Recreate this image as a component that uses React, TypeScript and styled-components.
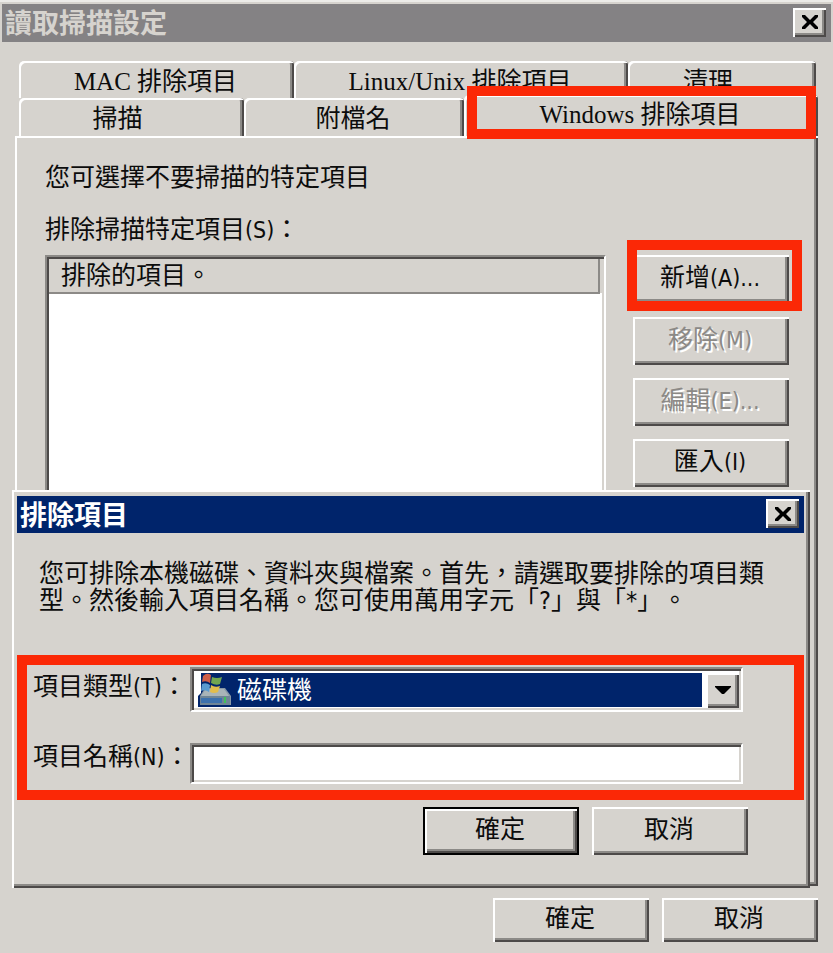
import React from "react";
import styled, { createGlobalStyle, css } from "styled-components";

const face = "#d6d3ce";
const light = "#ffffff";
const shade = "#8c8a87";
const dark = "#4d4a49";
const navy = "#00246b";
const ink = "#0c0c0c";
const red = "#fb2806";
const cjk = `"Noto Sans CJK TC"`;
const dialogLatin = `"DejaVu Sans Condensed", "DejaVu Sans"`;

const raised = css`
  box-shadow: inset 2px 2px ${light}, inset -2px -2px ${dark}, inset -4px -4px ${shade};
`;

const sunken = css`
  border: 2px solid;
  border-color: ${shade} ${light} ${light} ${shade};
  box-shadow: inset 2px 2px ${dark}, inset -2px -2px ${face};
`;

const GlobalStyle = createGlobalStyle`
  * { box-sizing: border-box; }
  body {
    margin: 0;
    background: ${face};
    color: ${ink};
    font: 25px/32px "Liberation Serif", ${cjk}, serif;
    text-spacing-trim: space-all;
  }
  button, input, select { font: inherit; color: inherit; }
`;

const PropertyWindow = styled.main`
  position: relative;
  background: ${face};
  border-top: 2px solid #ecebe8;
  padding: 2px 0 12px;
`;

const TitleBar = styled.header<{ $active?: boolean }>`
  display: flex;
  align-items: center;
  justify-content: space-between;
  height: ${(p) => (p.$active ? 37 : 38)}px;
  margin: ${(p) => (p.$active ? "0" : "0 2px")};
  padding: 0 5px 2px 3px;
  background: ${(p) => (p.$active ? navy : "#848284")};
  color: ${(p) => (p.$active ? "#ffffff" : face)};
`;

const Title = styled.h1`
  margin: 0;
  font: 700 27px/32px ${cjk}, sans-serif;
`;

const CloseButton = styled.button`
  display: grid;
  place-items: center;
  width: 33px;
  height: 29px;
  padding: 0;
  border: 0;
  background: ${face};
  color: #000;
  ${raised}
`;

const marked = css`
  position: relative;
  z-index: 1;
  &::after {
    content: "";
    position: absolute;
    border: 10px solid ${red};
    pointer-events: none;
  }
`;

const Tabs = styled.div`
  margin-top: 19px;
`;

const TabRow = styled.div<{ $back?: boolean; $columns: string }>`
  display: grid;
  grid-template-columns: ${(p) => p.$columns};
  height: ${(p) => (p.$back ? 37 : 38)}px;
  margin: 0 ${(p) => (p.$back ? 17 : 15)}px 0 19px;
`;

const Tab = styled.button<{ $short?: boolean }>`
  min-width: 0;
  padding: 4px ${(p) => (p.$short ? 28 : 2)}px 0 0;
  border: 0;
  border-radius: 5px 4px 0 0;
  background: ${face};
  box-shadow: inset 2px 2px ${light}, inset -2px 0 ${dark}, inset -4px 0 ${shade};
  font-size: 25px;
  line-height: 32px;
  white-space: nowrap;

  &[aria-selected="true"] {
    ${marked}
    margin-top: -3px;
    padding-top: 0;
    padding-bottom: 2px;
    &::after {
      inset: -9px 2px -3px 3px;
    }
  }
`;

const Panel = styled.section`
  display: flex;
  flex-direction: column;
  margin: 0 15px;
  padding: 26px 29px 26px 30px;
  ${raised}
`;

const Intro = styled.p`
  margin: 0 0 20px;
`;

const ListLabel = styled.div`
  margin-bottom: 9px;
`;

const Key = styled.span`
  font-family: ${dialogLatin}, sans-serif;
  font-size: 23px;
`;

const ListArea = styled.div`
  display: flex;
  gap: 27px;
`;

const ListBox = styled.div`
  flex: 1;
  height: 605px;
  padding: 2px;
  background: #fff;
  ${sunken}
`;

const Table = styled.table`
  width: 100%;
  border-collapse: collapse;
`;

const HeadCell = styled.th`
  height: 34px;
  padding: 0 0 0 12px;
  border-right: 2px solid ${shade};
  border-bottom: 2px solid ${shade};
  background: ${face};
  font-weight: 400;
  text-align: left;
`;

const HeadEnd = styled.td`
  width: 3px;
  padding: 0;
  background: ${face};
`;

const SideButtons = styled.div`
  display: flex;
  flex-direction: column;
  gap: 13px;
  width: 156px;
`;

const MarkedButton = styled.div`
  ${marked}
  display: grid;
  margin-bottom: 1px;
  &::after {
    inset: -15px -13px -8px -6px;
  }
`;

const PushButton = styled.button<{ $default?: boolean; $low?: boolean }>`
  width: 156px;
  height: ${(p) => (p.$low ? 44 : 48)}px;
  padding: 0 2px 2px 0;
  background: ${face};
  border: ${(p) => (p.$default ? "2px solid #000" : "0")};
  ${raised}
  &:disabled {
    color: #8b8986;
    text-shadow: 2px 2px #fff;
  }
`;

const ButtonRow = styled.footer<{ $inner?: boolean }>`
  display: flex;
  justify-content: flex-end;
  gap: 13px;
  padding: ${(p) => (p.$inner ? "7px 56px 29px 0" : "12px 15px 0 0")};
`;

const Dialog = styled.section`
  position: absolute;
  z-index: 2;
  top: 488px;
  left: 12px;
  right: 23px;
  padding: 6px 6px 4px 5px;
  background: ${face};
  ${raised}
`;

const Explanation = styled.p`
  margin: 0;
  padding: 27px 36px 41px 22px;
  font-family: ${dialogLatin}, ${cjk}, sans-serif;
  line-height: 27px;
`;

const Fields = styled.div`
  display: grid;
  grid-template-columns: max-content 1fr;
  row-gap: 31px;
  padding: 2px 51px 6px 6px;
  border: 10px solid ${red};
`;

const Label = styled.label<{ $tall?: boolean }>`
  width: 157px;
  padding-top: ${(p) => (p.$tall ? 6 : 0)}px;
  line-height: 27px;
  white-space: nowrap;
`;

const Combo = styled.div`
  display: flex;
  align-items: stretch;
  gap: 4px;
  height: 45px;
  padding: 4px 2px 2px 6px;
  background: #fff;
  ${sunken}
`;

const Choice = styled.div`
  display: flex;
  flex: 1;
  align-items: center;
  gap: 6px;
  min-width: 0;
  margin-bottom: 1px;
  background: ${navy};
  color: #fff;
`;

const Select = styled.select`
  flex: 1;
  min-width: 0;
  height: 34px;
  padding: 2px 0 0;
  border: 0;
  appearance: none;
  background: transparent;
  outline: 0;
`;

const DropButton = styled.button`
  display: grid;
  place-items: center;
  width: 33px;
  padding: 0;
  border: 0;
  background: ${face};
  ${raised}
`;

const TextInput = styled.input`
  width: 100%;
  height: 41px;
  padding: 0 8px;
  background: #fff;
  outline: 0;
  border-radius: 0;
  ${sunken}
`;

function CloseIcon() {
  return (
    <svg width="18" height="16" viewBox="0 0 18 16" aria-hidden="true">
      <path d="M1 1h3l5 5 5-5h3v2l-5 5 5 5v2h-3l-5-5-5 5H1v-2l5-5-5-5z" fill="currentColor" />
    </svg>
  );
}

function DriveIcon() {
  return (
    <svg width="33" height="34" viewBox="0 0 33 34" aria-hidden="true">
      <path d="M0 0h3v20l-3 3z" fill="#fff" />
      <path d="M7 15h20l6 8v9H2v-9z" fill="#8797a6" />
      <path d="M8 16h18l5 7H3z" fill="#a9b4b8" />
      <path d="M2 23h30v9H2z" fill="#6f8596" />
      <path d="M3 25h21v5H3z" fill="#3d71ad" />
      <path d="M26 24h2v6h-2z" fill="#3fc35a" />
      <path d="M5 3q4-4 8-1l-1 8q-4-3-8-1z" fill="#cf5e48" />
      <path d="M14 4q5 2 10 0l-2 7q-4 2-9-1z" fill="#72a64f" />
      <path d="M4 11q4-2 8 1l-1 7q-4-3-8-1z" fill="#5a9bd0" />
      <path d="M13 12q4 3 9 1l-2 6q-4 2-8 0z" fill="#e2bd4b" />
    </svg>
  );
}

function ArrowIcon() {
  return (
    <svg width="16" height="9" viewBox="0 0 16 9" aria-hidden="true">
      <path d="M0 0h16v1L9 8H7L0 1z" fill="#000" />
    </svg>
  );
}

export default function App() {
  return (
    <>
      <GlobalStyle />
      <PropertyWindow>
        <TitleBar>
          <Title>讀取掃描設定</Title>
          <CloseButton aria-label="關閉"><CloseIcon /></CloseButton>
        </TitleBar>

        <Tabs role="tablist">
          <TabRow $back $columns="275fr 334fr 188fr">
            <Tab role="tab">MAC 排除項目</Tab>
            <Tab role="tab">Linux/Unix 排除項目</Tab>
            <Tab role="tab" $short>清理</Tab>
          </TabRow>
          <TabRow $columns="225fr 220fr 354fr">
            <Tab role="tab" $short>掃描</Tab>
            <Tab role="tab">附檔名</Tab>
            <Tab role="tab" aria-selected="true">Windows 排除項目</Tab>
          </TabRow>
        </Tabs>

        <Panel role="tabpanel">
          <Intro>您可選擇不要掃描的特定項目</Intro>
          <ListLabel id="excluded-label">排除掃描特定項目<Key>(S)</Key>：</ListLabel>
          <ListArea>
            <ListBox>
              <Table aria-labelledby="excluded-label">
                <thead>
                  <tr>
                    <HeadCell scope="col">排除的項目。</HeadCell>
                    <HeadEnd />
                  </tr>
                </thead>
              </Table>
            </ListBox>
            <SideButtons>
              <MarkedButton>
                <PushButton>新增<Key>(A)...</Key></PushButton>
              </MarkedButton>
              <PushButton disabled>移除<Key>(M)</Key></PushButton>
              <PushButton disabled>編輯<Key>(E)...</Key></PushButton>
              <PushButton>匯入<Key>(I)</Key></PushButton>
            </SideButtons>
          </ListArea>
        </Panel>

        <ButtonRow>
          <PushButton $low>確定</PushButton>
          <PushButton $low>取消</PushButton>
        </ButtonRow>

        <Dialog role="dialog" aria-labelledby="dialog-title">
          <TitleBar $active>
            <Title as="h2" id="dialog-title">排除項目</Title>
            <CloseButton aria-label="關閉"><CloseIcon /></CloseButton>
          </TitleBar>
          <Explanation>
            您可排除本機磁碟、資料夾與檔案。首先，請選取要排除的項目類型。然後輸入項目名稱。您可使用萬用字元「?」與「*」。
          </Explanation>
          <Fields>
            <Label htmlFor="item-type" $tall>項目類型<Key>(T)</Key>：</Label>
            <Combo>
              <Choice>
                <DriveIcon />
                <Select id="item-type" defaultValue="drive">
                  <option value="drive">磁碟機</option>
                </Select>
              </Choice>
              <DropButton aria-label="開啟項目類型清單" tabIndex={-1}><ArrowIcon /></DropButton>
            </Combo>
            <Label htmlFor="item-name">項目名稱<Key>(N)</Key>：</Label>
            <TextInput id="item-name" type="text" />
          </Fields>
          <ButtonRow $inner>
            <PushButton $default>確定</PushButton>
            <PushButton>取消</PushButton>
          </ButtonRow>
        </Dialog>
      </PropertyWindow>
    </>
  );
}
